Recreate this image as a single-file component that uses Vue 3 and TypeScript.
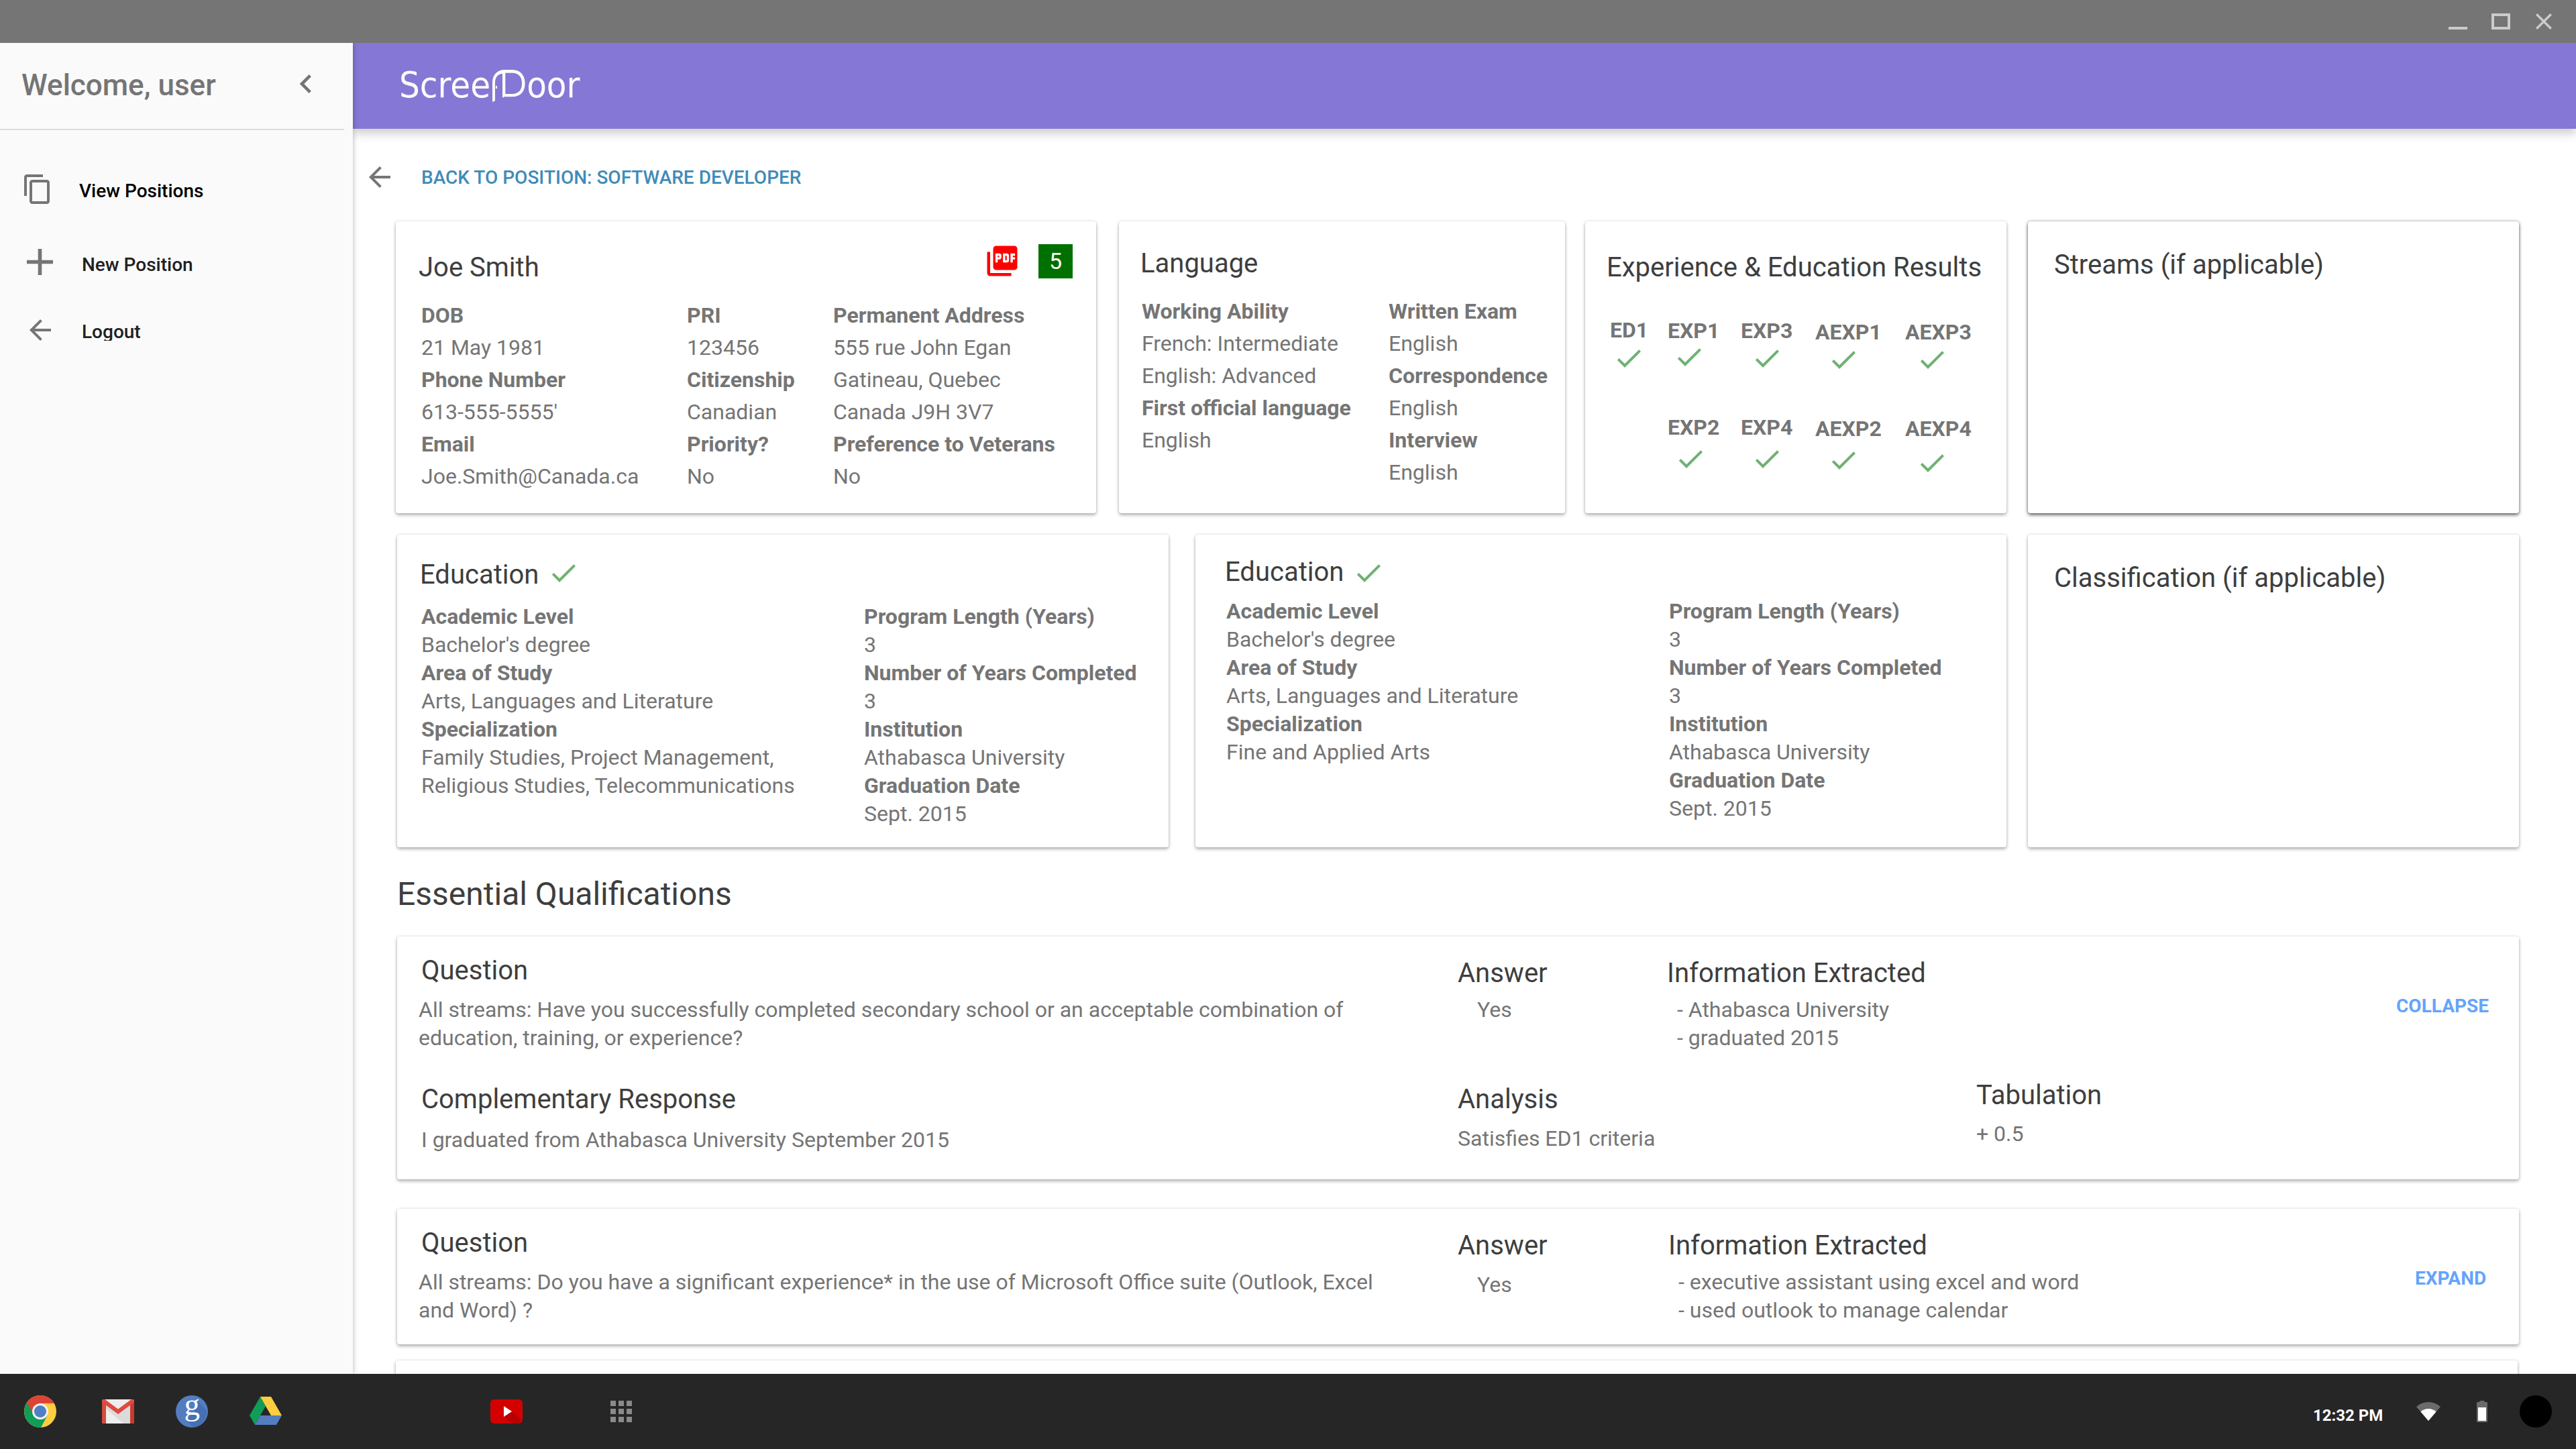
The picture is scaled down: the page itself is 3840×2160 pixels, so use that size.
<script setup lang="ts">
interface Line { text: string; bold?: boolean }
interface Result { name: string; labelGap: number; checkGap: number; indent: number }

const b = (text: string): Line => ({ text, bold: true })
const t = (text: string): Line => ({ text })

const personal: Line[][] = [
  [b('DOB'), t('21 May 1981'), b('Phone Number'), t("613-555-5555'"), b('Email'), t('Joe.Smith@Canada.ca')],
  [b('PRI'), t('123456'), b('Citizenship'), t('Canadian'), b('Priority?'), t('No')],
  [b('Permanent Address'), t('555 rue John Egan'), t('Gatineau, Quebec'), t('Canada J9H 3V7'), b('Preference to Veterans'), t('No')],
]

const language: Line[][] = [
  [b('Working Ability'), t('French: Intermediate'), t('English: Advanced'), b('First official language'), t('English')],
  [b('Written Exam'), t('English'), b('Correspondence'), t('English'), b('Interview'), t('English')],
]

const program: Line[] = [
  b('Program Length (Years)'), t('3'), b('Number of Years Completed'), t('3'),
  b('Institution'), t('Athabasca University'), b('Graduation Date'), t('Sept. 2015'),
]

const educations: { id: string; cols: Line[][] }[] = [
  {
    id: 'first',
    cols: [
      [b('Academic Level'), t("Bachelor's degree"), b('Area of Study'), t('Arts, Languages and Literature'), b('Specialization'), t('Family Studies, Project Management,'), t('Religious Studies, Telecommunications')],
      program,
    ],
  },
  {
    id: 'second',
    cols: [
      [b('Academic Level'), t("Bachelor's degree"), b('Area of Study'), t('Arts, Languages and Literature'), b('Specialization'), t('Fine and Applied Arts')],
      program,
    ],
  },
]

const results: Result[][] = [
  [{ name: 'ED1', labelGap: 0, checkGap: -1, indent: 4 }],
  [{ name: 'EXP1', labelGap: 1, checkGap: -4, indent: 8 }, { name: 'EXP2', labelGap: 62, checkGap: 4, indent: 10 }],
  [{ name: 'EXP3', labelGap: 1, checkGap: -2, indent: 15 }, { name: 'EXP4', labelGap: 60, checkGap: 4, indent: 15 }],
  [{ name: 'AEXP1', labelGap: 3, checkGap: -2, indent: 18 }, { name: 'AEXP2', labelGap: 60, checkGap: 4, indent: 18 }],
  [{ name: 'AEXP3', labelGap: 3, checkGap: -2, indent: 16 }, { name: 'AEXP4', labelGap: 60, checkGap: 8, indent: 16 }],
]

const checkPath = 'M9 16.17L4.83 12l-1.42 1.41L9 19 21 7l-1.41-1.41z'
const backPath = 'M20 11H7.83l5.59-5.59L12 4l-8 8 8 8 1.41-1.41L7.83 13H20v-2z'
</script>

<template>
  <div class="screen">
    <div class="titlebar">
      <svg class="win" viewBox="0 0 28 24"><rect y="20" width="28" height="4" /></svg>
      <svg class="win" viewBox="0 0 28 24"><path fill-rule="evenodd" d="M0 0h28v24H0zM4 4v16h20V4z" /></svg>
      <svg class="win close" viewBox="5 5 14 14"><path d="M19 6.41L17.59 5 12 10.59 6.41 5 5 6.41 10.59 12 5 17.59 6.41 19 12 13.41 17.59 19 19 17.59 13.41 12z" /></svg>
    </div>

    <div class="body">
      <aside class="sidebar">
        <div class="welcome">
          <span class="welcome-text">Welcome, user</span>
          <svg class="chevron" viewBox="0 0 24 24"><path d="M15.41 7.41L14 6l-6 6 6 6 1.41-1.41L10.83 12z" /></svg>
        </div>
        <div class="divider"></div>
        <nav>
          <div class="nav-item view">
            <svg viewBox="0 0 24 24"><path d="M16 1H4c-1.1 0-2 .9-2 2v14h2V3h12V1zm3 4H8c-1.1 0-2 .9-2 2v14c0 1.1.9 2 2 2h11c1.1 0 2-.9 2-2V7c0-1.1-.9-2-2-2zm0 16H8V7h11v14z" /></svg>
            <span>View Positions</span>
          </div>
          <div class="nav-item new">
            <svg viewBox="0 0 24 24"><path d="M19 13h-6v6h-2v-6H5v-2h6V5h2v6h6v2z" /></svg>
            <span>New Position</span>
          </div>
          <div class="nav-item logout">
            <svg viewBox="0 0 24 24"><path :d="backPath" /></svg>
            <span>Logout</span>
          </div>
        </nav>
      </aside>

      <main class="main">
        <header class="appbar">
          <div class="logo" aria-label="ScreenDoor">
            <span>Scree</span>
            <svg viewBox="510 120 165 165">
              <path d="M522 277V190C522 156 542 132 576 132H612C648 132 668 158 668 193C668 230 648 253 610 253H576L567 257V150C546 151 534 166 534 190V270ZM580 146V240H610C640 240 654 222 654 193C654 164 640 146 610 146Z" fill-rule="evenodd" />
              <rect x="537" y="204" width="6" height="12" />
            </svg>
            <span>oor</span>
          </div>
        </header>

        <div class="back">
          <svg viewBox="0 0 24 24"><path :d="backPath" /></svg>
          <a>BACK TO POSITION: SOFTWARE DEVELOPER</a>
        </div>

        <section class="row top-row">
          <article class="card person">
            <div class="card-head">
              <h2>Joe Smith</h2>
              <svg class="pdf" viewBox="0 0 24 24"><path d="M20 2H8c-1.1 0-2 .9-2 2v12c0 1.1.9 2 2 2h12c1.1 0 2-.9 2-2V4c0-1.1-.9-2-2-2zm-8.500 7.500c0 .83-.67 1.500-1.500 1.500H9v2H7.500V7H10c.83 0 1.500.67 1.500 1.500v1zm5 2c0 .83-.67 1.500-1.500 1.500h-2.500V7H15c.83 0 1.500.67 1.500 1.500v3zm4-3H19v1h1.500V11H19v2h-1.500V7h3v1.500zM9 9.500h1v-1H9v1zM4 6H2v14c0 1.100.9 2 2 2h14v-2H4V6zm10 5.500h1v-3h-1v3z" /></svg>
              <span class="score">5</span>
            </div>
            <div class="cols">
              <div v-for="(col, i) in personal" :key="i" class="col">
                <p v-for="(l, j) in col" :key="j" :class="{ bold: l.bold }">{{ l.text }}</p>
              </div>
            </div>
          </article>

          <article class="card language">
            <div class="card-head"><h2>Language</h2></div>
            <div class="cols">
              <div v-for="(col, i) in language" :key="i" class="col">
                <p v-for="(l, j) in col" :key="j" :class="{ bold: l.bold }">{{ l.text }}</p>
              </div>
            </div>
          </article>

          <article class="card results">
            <div class="card-head"><h2>Experience &amp; Education Results</h2></div>
            <div class="result-cols">
              <div v-for="(col, i) in results" :key="i" class="result-col">
                <template v-for="r in col" :key="r.name">
                  <span class="result-name" :style="{ marginTop: r.labelGap + 'px' }">{{ r.name }}</span>
                  <svg class="check" viewBox="0 0 24 24" :style="{ marginTop: r.checkGap + 'px', marginLeft: r.indent + 'px' }"><path :d="checkPath" /></svg>
                </template>
              </div>
            </div>
          </article>

          <article class="card side streams"><h2>Streams (if applicable)</h2></article>
        </section>

        <section class="row edu-row">
          <article v-for="e in educations" :key="e.id" class="card edu" :class="e.id">
            <div class="card-head">
              <h2>Education</h2>
              <svg class="check" viewBox="0 0 24 24"><path :d="checkPath" /></svg>
            </div>
            <div class="cols">
              <div v-for="(col, i) in e.cols" :key="i" class="col">
                <p v-for="(l, j) in col" :key="j" :class="{ bold: l.bold }">{{ l.text }}</p>
              </div>
            </div>
          </article>
          <article class="card side"><h2>Classification (if applicable)</h2></article>
        </section>

        <h1>Essential Qualifications</h1>

        <article class="card qual open">
          <div class="q-row">
            <div class="q-question">
              <h2>Question</h2>
              <p>All streams: Have you successfully completed secondary school or an acceptable combination of<br />education, training, or experience?</p>
            </div>
            <div class="q-answer"><h2>Answer</h2><p>Yes</p></div>
            <div class="q-info">
              <h2>Information Extracted</h2>
              <p>- Athabasca University<br />- graduated 2015</p>
            </div>
            <a class="action">COLLAPSE</a>
          </div>
          <div class="q-row">
            <div class="q-response">
              <h2>Complementary Response</h2>
              <p>I graduated from Athabasca University September 2015</p>
            </div>
            <div class="q-analysis"><h2>Analysis</h2><p>Satisfies ED1 criteria</p></div>
            <div class="q-tab"><h2>Tabulation</h2><p>+ 0.5</p></div>
          </div>
        </article>

        <article class="card qual closed">
          <div class="q-row">
            <div class="q-question">
              <h2>Question</h2>
              <p>All streams: Do you have a significant experience* in the use of Microsoft Office suite (Outlook, Excel<br />and Word) ?</p>
            </div>
            <div class="q-answer"><h2>Answer</h2><p>Yes</p></div>
            <div class="q-info">
              <h2>Information Extracted</h2>
              <p>- executive assistant using excel and word<br />- used outlook to manage calendar</p>
            </div>
            <a class="action">EXPAND</a>
          </div>
        </article>

        <article class="card qual next"></article>
      </main>
    </div>

    <footer class="taskbar">
      <svg class="ico chrome" viewBox="0 0 48 48">
        <circle cx="24" cy="24" r="24" fill="#ffcd40" />
        <path d="M24 24L4 11A24 24 0 0 0 25 48L35 29Z" fill="#0f9d58" />
        <path d="M4 11A24 24 0 0 1 45 12H24L13 27Z" fill="#db4437" />
        <circle cx="24" cy="24" r="12" fill="#f1f1f1" />
        <circle cx="24" cy="24" r="9" fill="#4f7fc4" />
      </svg>
      <svg class="ico gmail" viewBox="0 0 48 36">
        <rect width="48" height="36" rx="3" fill="#eee" />
        <path d="M6 8L24 22 42 8V36H32L6 14Z" fill="#ccc" opacity=".55" />
        <path d="M0 3V33a3 3 0 0 0 3 3H6V3Z" fill="#d54c3f" />
        <path d="M42 3V36h3a3 3 0 0 0 3-3V3Z" fill="#c63b2c" />
        <path d="M0 3A3 3 0 0 1 5 .6L24 14.500 43 .6A3 3 0 0 1 48 3Q48 4.500 46.500 5.500L24 22 1.500 5.500Q0 4.500 0 3Z" fill="#e04a3f" />
      </svg>
      <svg class="ico google" viewBox="0 0 48 48">
        <circle cx="24" cy="24" r="24" fill="#547dc0" />
        <path d="M32 8L46 22A24 24 0 0 1 26 48L16 37 28 24Z" fill="#4670b3" />
        <text x="12.500" y="29" font-family="Liberation Serif, serif" font-size="47" fill="#fff">g</text>
      </svg>
      <svg class="ico drive" viewBox="0 0 48 42">
        <path d="M16 0L0 28 8 42 24 14Z" fill="#0f9d58" />
        <path d="M16 0H32L48 28H32Z" fill="#ffcd40" />
        <path d="M16 28H48L40 42H8Z" fill="#547dc0" />
      </svg>
      <svg class="ico youtube" viewBox="0 0 48 36">
        <rect width="48" height="36" rx="6" fill="#d40000" />
        <path d="M32 18L46 30Q44 36 38 36H32L20 26Z" fill="#b80000" />
        <path d="M20 10V26L32 18Z" fill="#fff" />
      </svg>
      <div class="apps"><i v-for="n in 9" :key="n"></i></div>
      <span class="clock">12:32 PM</span>
      <svg class="wifi" viewBox="0 0 36 28">
        <path d="M0 7Q8 0 18 0T36 7L18 28Z" fill="#6b6b6b" />
        <path d="M6.500 14.500Q11 10 18 10T29.500 14.500L18 28Z" fill="#fff" />
      </svg>
      <svg class="battery" viewBox="0 0 16 32">
        <path d="M4 2Q4 0 6 0H10Q12 0 12 2H14.500Q16 2 16 3.500V30.500Q16 32 14.500 32H1.500Q0 32 0 30.500V3.500Q0 2 1.500 2Z" fill="#6b6b6b" />
        <rect x="2" y="10" width="12" height="20" fill="#fff" />
      </svg>
      <div class="avatar"></div>
    </footer>
  </div>
</template>

<style>
body { margin: 0; background: #fff; }
</style>

<style scoped>
* { box-sizing: border-box; }
.screen { width: 3840px; height: 2160px; display: flex; flex-direction: column; overflow: hidden; background: #fff; font-family: Roboto, sans-serif; color: #757575; }
svg { display: block; flex: none; }
h1, h2, p { margin: 0; font-weight: 400; white-space: nowrap; }
h1 { font-size: 48px; line-height: 57px; color: #3e3e3e; margin: 41px 0 0 66px; }
h2 { font-size: 40px; line-height: 47px; color: #3e3e3e; }
p { font-size: 32px; line-height: 42px; }
.bold { font-weight: 700; }

.titlebar { height: 64px; flex: none; background: #757575; display: flex; justify-content: flex-end; align-items: flex-start; gap: 36px; padding: 20px 36px 0 0; }
.win { width: 28px; height: 24px; fill: #ccc; }
.close { width: 24px; margin-left: 2px; }

.body { height: 1984px; flex: none; display: flex; overflow: hidden; }
.sidebar { width: 526px; flex: none; background: #fafafa; box-shadow: 0 0 8px rgba(0, 0, 0, .3); z-index: 2; clip-path: inset(0 -20px 0 0); }
.sidebar svg { fill: #757575; }
.welcome { height: 128px; display: flex; align-items: flex-start; justify-content: space-between; padding: 0 42px 0 32px; }
.welcome-text { font-size: 44px; line-height: 52px; font-weight: 500; margin-top: 37px; }
.chevron { width: 56px; height: 56px; margin-top: 33px; }
.divider { width: 513px; height: 2px; background: #dcdcdc; }
nav { padding-top: 64px; }
.nav-item { display: flex; align-items: flex-start; font-size: 28px; line-height: 33px; font-weight: 500; color: #212121; }
.nav-item svg { width: 48px; height: 48px; }
.view { padding-left: 32px; gap: 38px; color: #000; }
.view span, .logout span { margin-top: 10px; }
.new { margin-top: 51px; padding-left: 26px; gap: 29px; }
.new svg { width: 67px; height: 67px; }
.new span { margin-top: 21px; }
.logout { margin-top: 44px; padding-left: 36px; gap: 38px; }
.logout span { height: 30px; overflow: hidden; }

.main { flex: 1; min-width: 0; display: flex; flex-direction: column; }
.appbar { height: 128px; flex: none; background: #8577d5; box-shadow: 0 8px 12px rgba(0, 0, 0, .18); padding: 31px 0 0 69px; }
.logo { display: flex; align-items: flex-start; color: #fafafa; font-family: "DejaVu Sans Condensed", "DejaVu Sans", sans-serif; font-stretch: condensed; font-size: 54px; line-height: 63px; }
.logo svg { width: 55px; height: 55px; margin: 5px 0 0 -1px; fill: #fafafa; }
.back { display: flex; align-items: flex-start; height: 48px; margin: 48px 0 42px 16px; flex: none; }
.back svg { width: 48px; height: 48px; fill: #757575; }
.back a { margin: 8px 0 0 38px; font-size: 28px; line-height: 33px; font-weight: 500; color: #3f8bb8; }

.row { display: flex; flex: none; }
.card { background: #fff; border-radius: 4px; box-shadow: 0 0 4px rgba(0, 0, 0, .14), 0 3px 5px rgba(0, 0, 0, .27); flex: none; }
.card-head { display: flex; align-items: flex-start; }
.cols { display: flex; }
.check { width: 48px; height: 48px; fill: #6fb173; }

.top-row { height: 435px; margin-left: 64px; }
.top-row p { line-height: 48px; }
.person { width: 1044px; }
.person .card-head { height: 116px; padding: 0 35px 0 34px; }
.person h2 { margin-top: 45px; flex: 1; }
.pdf { width: 54px; height: 54px; margin: 32px 27px 0 0; fill: #f00; }
.score { width: 51px; height: 51px; margin-top: 34px; background: #007000; color: #fff; font-size: 34px; line-height: 51px; text-align: center; }
.person .col:nth-child(1) { margin-left: 38px; width: 396px; }
.person .col:nth-child(2) { width: 218px; }
.language { width: 665px; margin-left: 34px; }
.language .card-head { height: 110px; padding: 39px 0 0 32px; }
.language .col:nth-child(1) { margin-left: 34px; width: 368px; }
.results { width: 628px; margin-left: 30px; }
.results .card-head { height: 143px; padding: 45px 0 0 32px; }
.result-cols { display: flex; padding-left: 37px; }
.result-col { display: flex; flex-direction: column; align-items: flex-start; width: 109px; }
.result-col:nth-child(1) { width: 86px; }
.result-col:nth-child(4) { width: 134px; margin-left: 2px; }
.result-name { font-size: 32px; line-height: 38px; font-weight: 700; }
.side { width: 732px; margin-left: 32px; padding: 41px 0 0 39px; }
.streams { box-shadow: 0 0 4px rgba(0, 0, 0, .34), 0 3px 5px rgba(0, 0, 0, .5); }

.edu-row { height: 466px; margin: 32px 0 0 66px; }
.edu.first { width: 1150px; }
.first .card-head { height: 101px; padding-left: 34px; }
.first h2 { margin-top: 36px; }
.edu .check { margin: 33px 0 0 13px; }
.first .col:nth-child(1) { margin-left: 36px; width: 660px; }
.edu.second { width: 1209px; margin-left: 40px; }
.second .card-head { height: 93px; padding-left: 44px; }
.second h2 { margin-top: 32px; }
.second .col:nth-child(1) { margin-left: 46px; width: 660px; }

.qual { width: 3163px; margin-left: 66px; }
.open { height: 362px; margin-top: 35px; }
.closed { height: 202px; margin-top: 44px; }
.next { height: 120px; margin: 24px 0 0 64px; }
.q-row { display: flex; align-items: flex-start; }
.open .q-row:first-child { height: 172px; }
.q-question { width: 1581px; padding: 27px 0 0 32px; }
.q-question h2 { margin: 0 0 14px 4px; }
.q-answer { width: 312px; padding-top: 31px; }
.q-answer p { margin: 10px 0 0 29px; }
.closed .q-answer p { margin-top: 14px; }
.q-info { width: 1087px; padding-top: 31px; }
.q-info p { margin: 10px 0 0 15px; }
.closed .q-info { width: 1115px; padding-left: 2px; }
.action { margin-top: 87px; font-size: 28px; line-height: 33px; font-weight: 700; color: #64a4fb; }
.q-response { width: 1581px; padding: 47px 0 0 36px; }
.q-response p { margin-top: 16px; }
.q-analysis { width: 773px; padding-top: 47px; }
.q-analysis p { margin-top: 14px; }
.q-tab { padding-top: 41px; }
.q-tab p { margin-top: 13px; }

.taskbar { height: 112px; flex: none; background: #262626; display: flex; align-items: center; padding: 0 36px; z-index: 3; }
.ico { width: 48px; }
.gmail { margin-left: 68px; }
.google { margin-left: 62px; overflow: visible; }
.drive { margin: -2px 0 0 62px; }
.youtube { margin-left: 311px; }
.apps { margin-left: 131px; width: 33px; display: grid; grid-template-columns: repeat(3, 8px); gap: 4px; }
.apps i { height: 8px; background: #8a8a8a; }
.clock { margin: 12px 0 0 auto; width: 154px; font-size: 24px; line-height: 28px; font-weight: 700; color: #fff; white-space: nowrap; }
.wifi { width: 36px; }
.battery { width: 16px; margin-left: 54px; }
.avatar { width: 48px; height: 48px; margin-left: 48px; border-radius: 50%; background: #000; }
</style>
